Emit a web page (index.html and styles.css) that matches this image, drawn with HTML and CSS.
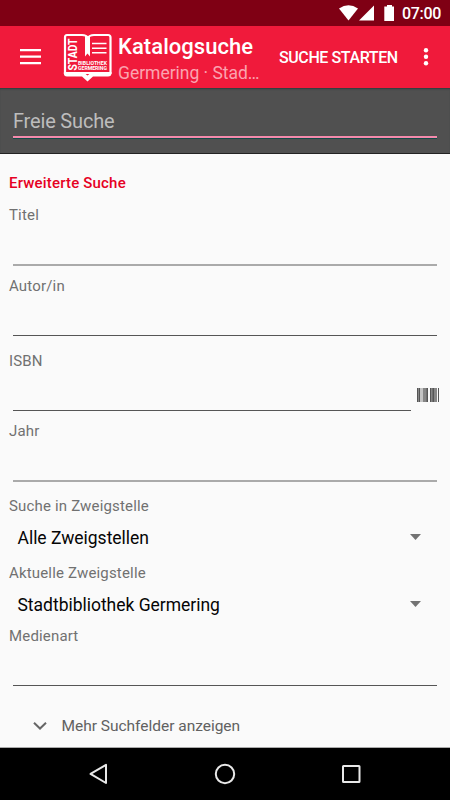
FILE: index.html
```html
<!DOCTYPE html>
<html lang="de">
<head>
<meta charset="utf-8">
<title>Katalogsuche</title>
<link rel="stylesheet" href="styles.css">
</head>
<body>
<div class="screen">
  <div class="status">
    <svg width="52" height="18" viewBox="0 0 52 18" fill="#fff">
      <path d="M0 3.500Q9.500-3 19 3.500L9.500 15.500Z"/>
      <path d="M35 .5V15.500H20Z"/>
    </svg>
    <svg class="battery" width="11" height="18" viewBox="0 0 11 18"><path fill="#fff" d="M3 0H8V1.500H10V16H.3V1.500H3Z"/></svg>
    <span class="clock">07:00</span>
  </div>
  <header class="appbar">
    <svg class="menu" width="22" height="17" viewBox="0 0 22 17"><path d="M0 2.200H21M0 8.700H21M0 15.200H21" stroke="#fff" stroke-width="2.300"/></svg>
    <svg class="logo" width="50" height="50" viewBox="0 0 50 50">
      <path d="M4 2H19Q23.500 2 25 5Q26.500 2 31 2H45Q47.500 2 47.500 4.500V40H2V4.500Q2 2 4 2Z" fill="none" stroke="#fff" stroke-width="2.200"/>
      <path d="M1 39H20L24.500 42.500L29 39H48.500V40Q48.500 43.500 45 43.500H30L24.500 48.500L19 43.500H4Q.8 43.500 .8 40Z" fill="#fff"/>
      <path d="M22 2.500L25 5L27 3V23.500L24.500 20.500L22 23.500Z" fill="#fff"/>
      <path d="M29 10.500H43.500M29 15.200H43.500M29 19.800H43.500" stroke="#fff" stroke-width="1.600"/>
      <text class="logo-big" transform="translate(13.800 37.500) rotate(-90)" textLength="32" lengthAdjust="spacingAndGlyphs">STADT</text>
      <text class="logo-small" x="15" y="32" textLength="29" lengthAdjust="spacingAndGlyphs">BIBLIOTHEK</text>
      <text class="logo-small" x="15" y="37.200" textLength="29" lengthAdjust="spacingAndGlyphs">GERMERING</text>
    </svg>
    <div class="titles">
      <div class="title">Katalogsuche</div>
      <div class="subtitle">Germering · Stad…</div>
    </div>
    <div class="action">SUCHE STARTEN</div>
    <svg class="more" width="6" height="20" viewBox="0 0 6 20" fill="#fff"><circle cx="3" cy="3.200" r="2.200"/><circle cx="3" cy="9.800" r="2.200"/><circle cx="3" cy="16.300" r="2.200"/></svg>
  </header>
  <div class="search"><div class="search-input"><span>Freie Suche</span></div></div>
  <main class="form">
    <h2 class="heading">Erweiterte Suche</h2>
    <div class="field titel"><div class="label">Titel</div><div class="input soft"></div></div>
    <div class="field autor"><div class="label">Autor/in</div><div class="input"></div></div>
    <div class="field isbn"><div class="label">ISBN</div>
      <div class="scan-row"><div class="input"></div>
        <svg width="23" height="14" viewBox="0 0 23 14" shape-rendering="crispEdges">
          <path d="M0 0H3V14H0ZM6 0H9V14H6ZM13 0H15V14H13ZM17 0H20V14H17Z" fill="#868686"/>
          <path d="M3 0H6V14H3Z" fill="#c4c4c4"/>
          <path d="M0 0H1V14H0ZM2 0H3V14H2ZM10 0H11V14H10ZM13 0H14V14H13ZM16 0H17V14H16ZM21 0H22V14H21Z" fill="#555"/>
          <path d="M9 0H10V14H9ZM15 0H16V14H15Z" fill="#707070"/>
        </svg>
      </div>
    </div>
    <div class="field jahr"><div class="label">Jahr</div><div class="input soft"></div></div>
    <div class="field branch"><div class="label">Suche in Zweigstelle</div><div class="spinner"><span>Alle Zweigstellen</span><i class="caret"></i></div></div>
    <div class="field current"><div class="label">Aktuelle Zweigstelle</div><div class="spinner"><span>Stadtbibliothek Germering</span><i class="caret"></i></div></div>
    <div class="field medium"><div class="label">Medienart</div><div class="input"></div></div>
    <div class="expand">
      <svg width="14" height="9" viewBox="0 0 14 9"><path d="M1 .8L7 6.500L13 .8" fill="none" stroke="#666" stroke-width="2"/></svg>
      <span>Mehr Suchfelder anzeigen</span>
    </div>
  </main>
  <nav class="nav">
    <svg width="20" height="22" viewBox="0 0 20 22"><path d="M17 1.800V20L1.500 10.900Z"/></svg>
    <svg width="22" height="22" viewBox="0 0 22 22"><circle cx="11" cy="11" r="9.200"/></svg>
    <svg width="20" height="20" viewBox="0 0 20 20"><rect x="2" y="2" width="16.500" height="16" rx=".5"/></svg>
  </nav>
</div>
</body>
</html>
```
FILE: styles.css
```css
* { box-sizing: border-box; }
body { margin: 0; font-family: Roboto, "Liberation Sans", sans-serif; }
svg { display: block; flex: none; }
.screen { width: 450px; height: 800px; display: flex; flex-direction: column; overflow: hidden; background: #fafafa; white-space: nowrap; }
.status { height: 26px; flex: none; background: #7f0014; display: flex; padding: 5px 0 0 339px; }
.battery { margin-left: -7px; }
.clock { margin-left: 7px; font-size: 16px; line-height: 18px; font-weight: 500; color: #fff; letter-spacing: -.3px; }
.appbar { height: 62px; flex: none; background: #f01a3b; display: flex; color: #fff; }
.menu { margin: 22px 0 0 20px; }
.logo { margin: 7px 0 0 21px; }
.logo-big { font-size: 12px; font-weight: 700; fill: #fff; }
.logo-small { font-size: 5.700px; font-weight: 700; fill: #fff; }
.titles { width: 161px; margin-left: 5px; padding-top: 8px; }
.title { font-size: 22px; line-height: 26px; font-weight: 500; letter-spacing: .05px; }
.subtitle { font-size: 17.500px; line-height: 26px; color: #fba3b0; letter-spacing: -.02px; }
.action { font-size: 16px; line-height: 63px; font-weight: 500; width: 119px; letter-spacing: -.4px; }
.more { margin: 21px 0 0 25px; }
.search { height: 66px; flex: none; background: #505050; border-bottom: 1px solid #222; padding: 0 13px; box-shadow: inset 0 2px 2px -1px #293b3b; }
.search-input { height: 50px; padding-top: 21px; border-bottom: 2px solid #f48aac; box-shadow: 0 1px #124c48; color: #bdbdbd; font-size: 20px; line-height: 24px; letter-spacing: -.18px; }
.form { flex: 1; padding: 19px 9px 0; border-bottom: 1px solid #aaa; }
.heading { margin: 0; font-size: 15px; line-height: 20px; font-weight: 500; color: #e60023; letter-spacing: .18px; }
.label { font-size: 15px; line-height: 20px; color: #717171; letter-spacing: .17px; }
.input { height: 40px; margin: 0 4px; border-bottom: 1px solid #555; }
.soft { height: 41px; border-bottom: 2px solid #aaa; }
.titel { margin-top: 12px; }
.autor { margin-top: 10px; }
.isbn { margin-top: 15px; }
.jahr { margin-top: 10px; }
.branch { margin-top: 14px; }
.current { margin-top: 11px; }
.medium { margin-top: 7px; }
.scan-row { display: flex; align-items: center; }
.scan-row .input { width: 398px; margin-right: 6px; }
.scan-row svg { margin-top: 8px; }
.spinner { height: 30px; margin-top: 6px; padding: 0 20px 0 8.500px; display: flex; align-items: center; justify-content: space-between; font-size: 17.500px; line-height: 30px; color: #050505; letter-spacing: -.02px; }
.spinner span { padding-top: 1px; }
.caret { width: 11px; height: 6px; background: #737373; clip-path: polygon(0 0, 100% 0, 50% 100%); }
.expand { display: flex; align-items: center; margin-top: 30px; padding-left: 23.500px; height: 20px; gap: 15px; font-size: 15.500px; color: #616161; letter-spacing: -.02px; }
.nav { height: 52px; flex: none; background: #000; display: flex; align-items: center; padding: 0 89px; justify-content: space-between; }
.nav svg { fill: none; stroke: #e8e8e8; stroke-width: 2; stroke-linejoin: round; }
```
